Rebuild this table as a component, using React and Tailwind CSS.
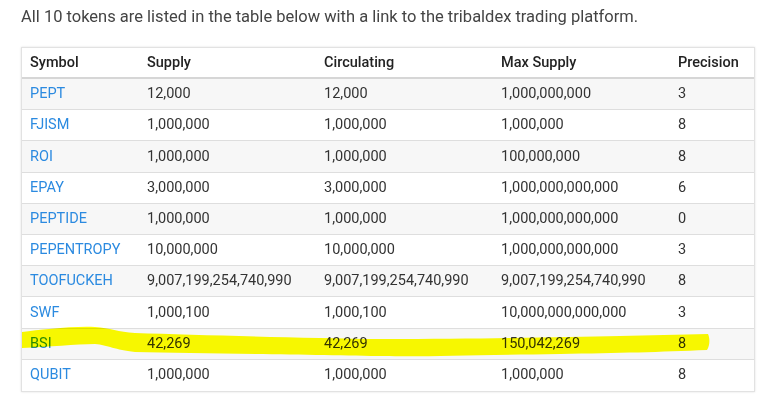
import React from "react";

const tokens = [
	{ symbol: "PEPT", supply: "12,000", circulating: "12,000", max: "1,000,000,000", precision: "3" },
	{ symbol: "FJISM", supply: "1,000,000", circulating: "1,000,000", max: "1,000,000", precision: "8" },
	{ symbol: "ROI", supply: "1,000,000", circulating: "1,000,000", max: "100,000,000", precision: "8" },
	{ symbol: "EPAY", supply: "3,000,000", circulating: "3,000,000", max: "1,000,000,000,000", precision: "6" },
	{ symbol: "PEPTIDE", supply: "1,000,000", circulating: "1,000,000", max: "1,000,000,000,000", precision: "0" },
	{ symbol: "PEPENTROPY", supply: "10,000,000", circulating: "10,000,000", max: "1,000,000,000,000", precision: "3" },
	{ symbol: "TOOFUCKEH", supply: "9,007,199,254,740,990", circulating: "9,007,199,254,740,990", max: "9,007,199,254,740,990", precision: "8" },
	{ symbol: "SWF", supply: "1,000,100", circulating: "1,000,100", max: "10,000,000,000,000", precision: "3" },
	{ symbol: "BSI", supply: "42,269", circulating: "42,269", max: "150,042,269", precision: "8" },
	{ symbol: "QUBIT", supply: "1,000,000", circulating: "1,000,000", max: "1,000,000", precision: "8" }
];

// hand-drawn marker stroke over the BSI row
function Highlighter() {
	return (
		<svg
			className="absolute left-0 top-0 pointer-events-none mix-blend-multiply"
			width="768"
			height="400"
			viewBox="0 0 768 400"
		>
			<path
				d="M22 332 C40 330 70 326 95 327 C110 328 118 332 135 333 C200 335 300 338 384 339 C480 339 560 337 620 336 L708 334 C710 338 710 346 707 350 C660 352 620 353 560 354 C480 355 420 357 384 356 C320 355 200 353 135 352 C115 350 108 345 95 344 C75 344 50 347 22 348 Z"
				fill="#ffff00"
			/>
		</svg>
	);
}

export default function App() {
	return (
		<div className="relative w-[768px] h-[400px] bg-white overflow-hidden" style={{ fontFamily: "Roboto, 'Liberation Sans', sans-serif" }}>
			<p className="ml-[21px] mt-[5px] text-[16.5px] leading-[24px] text-[#444]">
				All 10 tokens are listed in the table below with a link to the tribaldex trading platform.
			</p>

			<div className="ml-[21px] mt-[18px] w-[734px] border border-[#e2e2e2] shadow-[0_0_2px_rgba(0,0,0,0.12)]">
				<table className="w-full table-fixed border-separate border-spacing-0 text-[14.5px] text-[#333]">
					<colgroup>
						<col className="w-[117px]" />
						<col className="w-[177px]" />
						<col className="w-[177px]" />
						<col className="w-[177px]" />
						<col />
					</colgroup>
					<thead>
						<tr>
							{["Symbol", "Supply", "Circulating", "Max Supply", "Precision"].map(h => (
								<th key={h} className="h-[31px] px-2 text-left font-medium text-[#222] border-b-2 border-[#d6d6d6]">
									{h}
								</th>
							))}
						</tr>
					</thead>
					<tbody>
						{tokens.map((t, i) => {
							const last = i === tokens.length - 1;
							const cell = `h-[31.2px] px-2 ${last ? "" : "border-b border-[#dedede]"}`;
							return (
								<tr key={t.symbol} className={i % 2 === 0 ? "bg-[#f7f7f7]" : "bg-white"}>
									<td className={cell}>
										<a href="#" className="text-[#2b8ae0]">{t.symbol}</a>
									</td>
									<td className={cell}>{t.supply}</td>
									<td className={cell}>{t.circulating}</td>
									<td className={cell}>{t.max}</td>
									<td className={cell}>{t.precision}</td>
								</tr>
							);
						})}
					</tbody>
				</table>
			</div>

			<Highlighter />
		</div>
	);
}
